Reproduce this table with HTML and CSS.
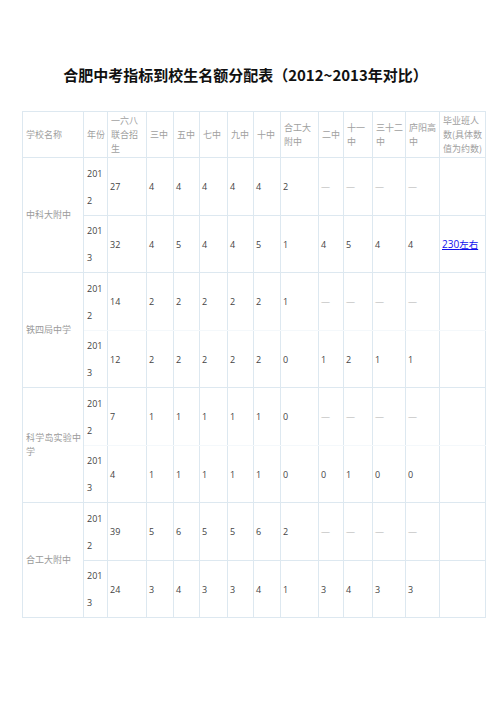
FILE: index.html
```html
<!DOCTYPE html>
<html lang="zh-CN">
<head>
<meta charset="utf-8">
<title>合肥中考指标到校生名额分配表</title>
<link rel="stylesheet" href="styles.css">
</head>
<body>
<div class="page">
  <h1 class="title">合肥中考指标到校生名额分配表（2012~2013年对比）</h1>
  <table class="quota">
    <colgroup>
      <col style="width:61px"><col style="width:24px"><col style="width:39px"><col style="width:27px">
      <col style="width:26px"><col style="width:28px"><col style="width:26px"><col style="width:27px">
      <col style="width:38px"><col style="width:25px"><col style="width:29px"><col style="width:33px">
      <col style="width:34px"><col style="width:46px">
    </colgroup>
    <thead>
      <tr class="head">
        <th>学校名称</th><th>年份</th><th>一六八<br>联合招<br>生</th><th>三中</th><th>五中</th><th>七中</th><th>九中</th><th>十中</th><th>合工大<br>附中</th><th>二中</th><th>十一<br>中</th><th>三十二<br>中</th><th>庐阳高<br>中</th><th>毕业班人<br>数(具体数<br>值为约数)</th>
      </tr>
    </thead>
    <tbody>
      <tr class="r1">
        <td rowspan="2" class="school">中科大附中</td><td class="year">2012</td><td>27</td><td>4</td><td>4</td><td>4</td><td>4</td><td>4</td><td>2</td><td class="dash">—</td><td class="dash">—</td><td class="dash">—</td><td class="dash">—</td><td></td>
      </tr>
      <tr class="r2">
        <td class="year">2013</td><td>32</td><td>4</td><td>5</td><td>4</td><td>4</td><td>5</td><td>1</td><td>4</td><td>5</td><td>4</td><td>4</td><td><a class="link" href="#">230<span class="cjk">左右</span></a></td>
      </tr>
      <tr class="r1 noline">
        <td rowspan="2" class="school">铁四局中学</td><td class="year">2012</td><td>14</td><td>2</td><td>2</td><td>2</td><td>2</td><td>2</td><td>1</td><td class="dash">—</td><td class="dash">—</td><td class="dash">—</td><td class="dash">—</td><td></td>
      </tr>
      <tr class="r2">
        <td class="year">2013</td><td>12</td><td>2</td><td>2</td><td>2</td><td>2</td><td>2</td><td>0</td><td>1</td><td>2</td><td>1</td><td>1</td><td></td>
      </tr>
      <tr class="r1 noline">
        <td rowspan="2" class="school justify">科学岛实验中学</td><td class="year">2012</td><td>7</td><td>1</td><td>1</td><td>1</td><td>1</td><td>1</td><td>0</td><td class="dash">—</td><td class="dash">—</td><td class="dash">—</td><td class="dash">—</td><td></td>
      </tr>
      <tr class="r2">
        <td class="year">2013</td><td>4</td><td>1</td><td>1</td><td>1</td><td>1</td><td>1</td><td>0</td><td>0</td><td>1</td><td>0</td><td>0</td><td></td>
      </tr>
      <tr class="r1">
        <td rowspan="2" class="school">合工大附中</td><td class="year">2012</td><td>39</td><td>5</td><td>6</td><td>5</td><td>5</td><td>6</td><td>2</td><td class="dash">—</td><td class="dash">—</td><td class="dash">—</td><td class="dash">—</td><td></td>
      </tr>
      <tr class="r2">
        <td class="year">2013</td><td>24</td><td>3</td><td>4</td><td>3</td><td>3</td><td>4</td><td>1</td><td>3</td><td>4</td><td>3</td><td>3</td><td></td>
      </tr>
    </tbody>
  </table>
</div>
</body>
</html>
```
FILE: styles.css
```css
html, body {
  margin: 0;
  padding: 0;
  background: #ffffff;
}
.page {
  padding: 63px 11px 40px 22px;
}
.title {
  margin: 0 0 24px -22px;
  width: 491px;
  text-align: center;
  font-family: "Noto Sans CJK SC", "Noto Sans", sans-serif;
  font-weight: 700;
  font-size: 15px;
  line-height: 24px;
  color: #111;
}
.quota {
  border-collapse: collapse;
  table-layout: fixed;
  width: 463px;
  font-family: "Open Sans", "Noto Sans CJK SC", sans-serif;
  font-size: 9px;
  color: #444;
}
.quota th, .quota td {
  border: 1px solid #dde8f0;
  padding: 0 2px 0 2px;
  text-align: left;
  vertical-align: middle;
}
.quota th {
  font-family: "Noto Sans CJK SC", sans-serif;
  font-weight: 400;
  font-size: 9px;
  line-height: 14px;
  color: #a0a0a0;
  white-space: nowrap;
  height: 45px;
  padding: 0 1px 0 3px;
}
.quota td {
  line-height: 27px;
}
.r1 td { height: 57px; }
.r2 td { height: 56px; }
.noline td { border-bottom-color: #f4f8fb; }
.quota td.school {
  font-family: "Noto Sans CJK SC", sans-serif;
  color: #9a9a9a;
  line-height: 14px;
  padding-left: 3px;
  border-bottom-color: #dde8f0;
}
.quota td.justify {
  text-align: justify;
}
.quota td.year {
  word-break: break-all;
  padding-left: 3px;
}
.quota td.dash {
  color: #b0b0b0;
}
.link {
  color: #1010ee;
  text-decoration: underline;
  font-size: 10px;
}
.cjk {
  font-family: "Noto Sans CJK SC", sans-serif;
  font-size: 9.5px;
}
```
